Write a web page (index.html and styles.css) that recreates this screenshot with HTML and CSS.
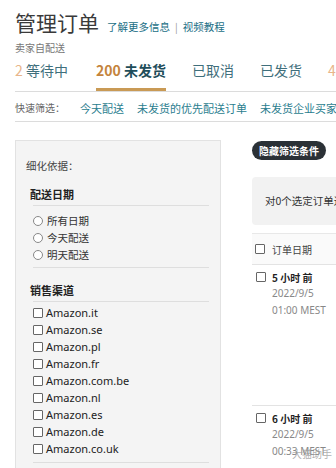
FILE: index.html
```html
<!DOCTYPE html>
<html lang="zh-CN">
<head>
<meta charset="utf-8">
<title>管理订单</title>
<link rel="stylesheet" href="styles.css">
</head>
<body>
<div class="page">
  <div class="title-row">
    <h1 class="title">管理订单</h1>
    <a class="link">了解更多信息</a>
    <span class="sep">|</span>
    <a class="link">视频教程</a>
  </div>
  <div class="subtitle">卖家自配送</div>

  <nav class="tabs">
    <div class="tab"><span class="num light">2</span> 等待中</div>
    <div class="tab active"><span class="num">200</span> 未发货</div>
    <div class="tab">已取消</div>
    <div class="tab">已发货</div>
    <div class="tab"><span class="num light">4</span></div>
  </nav>

  <div class="quick">
    <span class="quick-label">快速筛选：</span>
    <a class="quick-link">今天配送</a>
    <a class="quick-link">未发货的优先配送订单</a>
    <a class="quick-link">未发货企业买家订单</a>
  </div>

  <div class="main">
    <aside class="panel">
      <div class="panel-title">细化依据：</div>

      <div class="section">
        <div class="section-head">配送日期</div>
        <ul class="opts">
          <li class="opt"><span class="radio"></span>所有日期</li>
          <li class="opt"><span class="radio"></span>今天配送</li>
          <li class="opt"><span class="radio"></span>明天配送</li>
        </ul>
      </div>

      <div class="section gap">
        <div class="section-head">销售渠道</div>
        <ul class="opts latin">
          <li class="opt"><span class="check"></span>Amazon.it</li>
          <li class="opt"><span class="check"></span>Amazon.se</li>
          <li class="opt"><span class="check"></span>Amazon.pl</li>
          <li class="opt"><span class="check"></span>Amazon.fr</li>
          <li class="opt"><span class="check"></span>Amazon.com.be</li>
          <li class="opt"><span class="check"></span>Amazon.nl</li>
          <li class="opt"><span class="check"></span>Amazon.es</li>
          <li class="opt"><span class="check"></span>Amazon.de</li>
          <li class="opt"><span class="check"></span>Amazon.co.uk</li>
        </ul>
      </div>
    </aside>

    <section class="results">
      <div class="btn-row"><button class="hide-btn">隐藏筛选条件</button></div>
      <div class="bulk">对0个选定订单进行操作</div>
      <div class="thead"><span class="check"></span>订单日期</div>
      <div class="row">
        <div class="row-head"><span class="check"></span><b>5 小时 前</b></div>
        <div class="date">2022/9/5</div>
        <div class="date">01:00 MEST</div>
      </div>
      <div class="row last">
        <div class="row-head"><span class="check"></span><b>6 小时 前</b></div>
        <div class="date">2022/9/5</div>
        <div class="date">00:33 MEST</div>
        <span class="watermark">大猫助手</span>
      </div>
    </section>
  </div>
</div>
</body>
</html>
```

FILE: styles.css
```css
html, body {
  margin: 0;
  padding: 0;
  background: #ffffff;
}
body {
  width: 336px;
  height: 468px;
  overflow: hidden;
  font-family: "Noto Sans CJK SC", "Noto Sans", sans-serif;
  color: #333;
}
.page {
  padding: 6px 0 0 15px;
  width: 600px;
  white-space: nowrap;
}
.title-row {
  display: flex;
  align-items: baseline;
  height: 32px;
}
.title {
  margin: 0;
  font-size: 21px;
  font-weight: 400;
  line-height: 32px;
  color: #3a3a3a;
  margin-right: 8px;
}
.link {
  font-size: 10.5px;
  color: #1b6f86;
}
.sep {
  font-size: 10px;
  color: #999;
  margin: 0 5px;
}
.subtitle {
  font-size: 10px;
  line-height: 14px;
  color: #777;
  margin-top: 3px;
}
.tabs {
  display: flex;
  gap: 26px;
  margin-top: 5px;
  border-bottom: 1px solid #dcdcdc;
}
.tab {
  font-size: 14px;
  line-height: 20px;
  padding-bottom: 8px;
  border-bottom: 3px solid transparent;
  color: #3f6f7c;
}
.tab .num {
  color: #c4843c;
  font-weight: 700;
}
.tab .num.light {
  color: #e8b58a;
  font-weight: 400;
}
.tab.active {
  border-bottom-color: #c99a55;
  font-weight: 700;
  color: #1e4d5a;
  margin-left: 2px;
}
.quick {
  display: flex;
  align-items: center;
  gap: 13px;
  padding: 8px 0 5px;
  border-bottom: 1px solid #dcdcdc;
  line-height: 16px;
}
.quick-label {
  font-size: 10px;
  color: #666;
  margin-right: 2px;
}
.quick-link {
  font-size: 11px;
  color: #2a7d8e;
}
.main {
  display: flex;
  align-items: flex-start;
  gap: 31px;
  margin-top: 18px;
}
.panel {
  width: 194px;
  height: 340px;
  background: #f4f4f4;
  border: 1px solid #e2e2e2;
  padding: 17px 0 0 10px;
}
.panel-title {
  font-size: 10.5px;
  line-height: 16px;
  color: #444;
}
.section {
  margin-top: 12px;
}
.section.gap {
  margin-top: 14px;
}
.section-head {
  font-size: 11px;
  line-height: 16px;
  font-weight: 700;
  color: #222;
  padding-left: 4px;
}
.opts {
  list-style: none;
  margin: 3px 0 0 7px;
  width: 176px;
  padding: 6px 0 4px;
  border-top: 1px solid #dedede;
  border-bottom: 1px solid #dedede;
}
.opts.latin {
  padding: 2px 0 5px;
}
.opt {
  display: flex;
  align-items: center;
  height: 17px;
  font-size: 10.5px;
  color: #333;
}
.opts.latin .opt {
  font-family: "Noto Sans", "Noto Sans CJK SC", sans-serif;
  font-size: 11px;
  color: #222;
}
.radio {
  width: 8px;
  height: 8px;
  border: 1px solid #888;
  border-radius: 50%;
  background: #fff;
  margin-right: 4px;
  flex: none;
}
.check {
  width: 8px;
  height: 8px;
  border: 1px solid #666;
  border-radius: 1px;
  background: #fff;
  margin-right: 3px;
  flex: none;
}
.results {
  width: 300px;
}
.btn-row {
  display: flex;
}
.hide-btn {
  margin: 1px 0 0;
  height: 19px;
  padding: 0 7px;
  border: none;
  border-radius: 10px;
  background: #2b3136;
  color: #fff;
  font-family: "Noto Sans CJK SC", sans-serif;
  font-size: 10px;
  font-weight: 700;
  line-height: 19px;
}
.bulk {
  margin-top: 17px;
  height: 48px;
  line-height: 48px;
  background: #f2f2f2;
  border-radius: 4px;
  padding-left: 13px;
  font-size: 10.5px;
  color: #333;
}
.thead {
  margin-top: 8px;
  height: 30px;
  display: flex;
  align-items: center;
  padding-left: 3px;
  background: #fafafa;
  border-top: 1px solid #e8e8e8;
  border-bottom: 1px solid #e3e3e3;
  font-size: 10px;
  color: #444;
}
.thead .check {
  margin-right: 7px;
}
.row {
  position: relative;
  height: 136px;
  padding-top: 4px;
  border-bottom: 1px solid #e3e3e3;
}
.row.last {
  border-bottom: none;
}
.row-head {
  display: flex;
  align-items: center;
  height: 16px;
  padding-left: 4px;
  font-size: 10px;
  color: #222;
}
.row-head .check {
  margin-right: 6px;
}
.date {
  padding-left: 20px;
  height: 17px;
  line-height: 17px;
  font-family: "Noto Sans", sans-serif;
  font-size: 10px;
  color: #888;
}
.watermark {
  position: absolute;
  left: 40px;
  top: 40px;
  font-size: 10px;
  color: rgba(150, 150, 150, 0.75);
}
```
